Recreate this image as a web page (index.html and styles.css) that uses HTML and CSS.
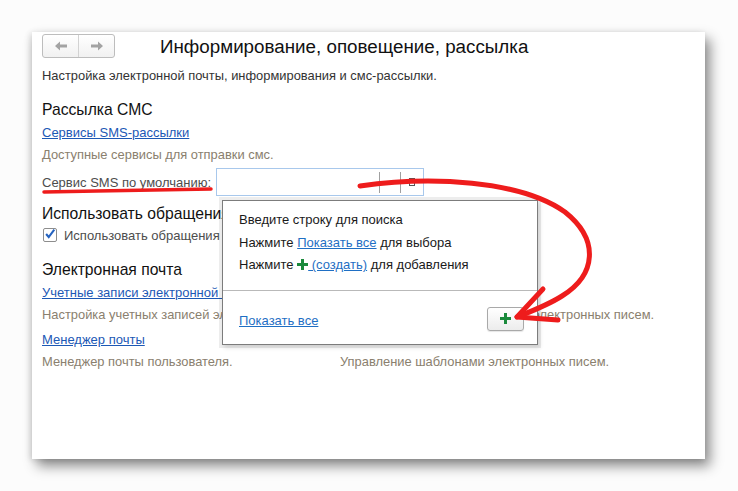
FILE: index.html
```html
<!DOCTYPE html>
<html lang="ru">
<head>
<meta charset="utf-8">
<link rel="stylesheet" href="styles.css">
</head>
<body>
<div class="window">
  <div class="header">
    <div class="nav">
      <span class="nav-btn"><svg width="14" height="10" viewBox="0 0 14 10"><path d="M1 5 L6 0.5 L6 3.5 L13 3.5 L13 6.5 L6 6.5 L6 9.5 Z" fill="#a3a3a3"/></svg></span>
      <span class="nav-btn"><svg width="14" height="10" viewBox="0 0 14 10"><path d="M13 5 L8 0.5 L8 3.5 L1 3.5 L1 6.5 L8 6.5 L8 9.5 Z" fill="#a3a3a3"/></svg></span>
    </div>
    <h1 class="title">Информирование, оповещение, рассылка</h1>
  </div>
  <p class="subtitle">Настройка электронной почты, информирования и смс-рассылки.</p>

  <h2 class="section">Рассылка СМС</h2>
  <a class="link" href="#">Сервисы SMS-рассылки</a>
  <p class="desc">Доступные сервисы для отправки смс.</p>
  <div class="field-row">
    <span class="field-label">Сервис SMS по умолчанию:</span>
    <div class="field">
      <span class="field-sep sep1"></span>
      <span class="field-sep sep2"></span>
      <span class="field-icon"></span>
      <div class="popup">
        <div class="popup-body">
          <p class="popup-line">Введите строку для поиска</p>
          <p class="popup-line">Нажмите <a class="plink" href="#">Показать все</a> для выбора</p>
          <p class="popup-line">Нажмите <span class="plus small"></span><a class="plink" href="#"> (создать)</a> для добавления</p>
        </div>
        <div class="popup-foot">
          <a class="plink" href="#">Показать все</a>
          <button class="add-btn"><span class="plus"></span></button>
        </div>
      </div>
    </div>
  </div>

  <h2 class="section sec2">Использовать обращения</h2>
  <label class="check-row"><span class="checkbox"><svg width="14" height="14" viewBox="0 0 14 14"><path d="M2.5 7 L5.5 10.5 L12 2" fill="none" stroke="#2563c0" stroke-width="2.4"/></svg></span>Использовать обращения</label>

  <h2 class="section sec3">Электронная почта</h2>
  <div class="grid">
    <a class="link" href="#">Учетные записи электронной почты</a>
    <span></span>
    <p class="desc span2">Настройка учетных записей электронной почты для отправки, а также получения электронных писем.</p>
    <a class="link gap-top" href="#">Менеджер почты</a>
    <span></span>
    <p class="desc">Менеджер почты пользователя.</p>
    <p class="desc">Управление шаблонами электронных писем.</p>
  </div>
</div>

<svg class="annot" width="738" height="491" viewBox="0 0 738 491">
  <path d="M44 192 C100 191 160 190 211 189" fill="none" stroke="#ee1c1c" stroke-width="3.5" stroke-linecap="round"/>
  <path d="M360 186 C430 176 520 180 565 212 C600 240 596 275 562 296 C548 305 532 311 517 317" fill="none" stroke="#ee1c1c" stroke-width="5" stroke-linecap="round"/>
  <path d="M543 289 L517 317 L558 320" fill="none" stroke="#ee1c1c" stroke-width="5" stroke-linecap="round" stroke-linejoin="round"/>
</svg>
</body>
</html>
```

FILE: styles.css
```css
html, body {
  margin: 0;
  padding: 0;
}
body {
  background: #fcfcfc;
  width: 738px;
  height: 491px;
  position: relative;
  overflow: hidden;
  font-family: "Liberation Sans", Arial, sans-serif;
  color: #333;
}
.window {
  position: absolute;
  left: 32px;
  top: 32px;
  width: 673px;
  height: 427px;
  box-sizing: border-box;
  background: #fff;
  padding: 2px 10px 0 10px;
  box-shadow: 5px 7px 12px rgba(0,0,0,0.45), -2px 1px 6px rgba(0,0,0,0.12);
}
.header {
  display: flex;
  align-items: center;
  height: 24px;
}
.nav {
  display: flex;
  width: 73px;
  height: 24px;
  box-sizing: border-box;
  border: 1px solid #bdbdbd;
  border-radius: 3px;
  background: linear-gradient(#ffffff, #f1f1f1);
}
.nav-btn {
  flex: 1;
  display: flex;
  align-items: center;
  justify-content: center;
}
.nav-btn + .nav-btn {
  border-left: 1px solid #d2d2d2;
}
.title {
  margin: 1px 0 0 45px;
  font-size: 18.8px;
  font-weight: normal;
  color: #111;
  line-height: 24px;
}
.subtitle {
  margin: 9px 0 0;
  font-size: 12.9px;
  line-height: 17px;
  color: #333;
}
.section {
  margin: 16px 0 0;
  font-size: 15.7px;
  font-weight: normal;
  line-height: 20px;
  color: #111;
}
.sec2 { margin-top: 8px; white-space: nowrap; }
.sec3 { margin-top: 14px; }
.link {
  display: block;
  margin-top: 2px;
  font-size: 13px;
  line-height: 22px;
  color: #1c58b5;
  text-decoration: underline;
  white-space: nowrap;
}
.desc {
  margin: 0;
  font-size: 12.9px;
  line-height: 22px;
  color: #8a806e;
  white-space: nowrap;
}
.field-row {
  display: flex;
  align-items: center;
  margin-top: 2px;
  height: 28px;
}
.field-label {
  font-size: 13px;
  color: #4d4d4d;
  width: 174px;
  white-space: nowrap;
}
.field {
  position: relative;
  width: 208px;
  height: 28px;
  box-sizing: border-box;
  border: 1px solid #a8c8ec;
  background: #fff;
}
.field-sep {
  position: absolute;
  top: 3px;
  bottom: 2px;
  width: 1px;
  background: #a0a0a0;
}
.sep1 { left: 162px; }
.sep2 { left: 183px; }
.field-icon {
  position: absolute;
  left: 192px;
  top: 9px;
  width: 4px;
  height: 6px;
  border: 1px solid #555;
}
.popup {
  position: absolute;
  left: 5px;
  top: 31px;
  width: 316px;
  height: 145px;
  box-sizing: border-box;
  border: 1px solid #7c7c7c;
  background: #fff;
  box-shadow: 0 0 0 3px rgba(0,0,0,0.07), 2px 3px 4px rgba(0,0,0,0.12);
  z-index: 5;
}
.popup-body {
  height: 90px;
  box-sizing: border-box;
  padding: 8px 0 0 16px;
  border-bottom: 1px solid #b9b9b9;
}
.popup-line {
  margin: 0;
  font-size: 13px;
  line-height: 22.5px;
  color: #1a1a1a;
  white-space: nowrap;
}
.plink {
  color: #1f6fc4;
  text-decoration: underline;
}
.popup-foot {
  display: flex;
  align-items: center;
  justify-content: space-between;
  height: 53px;
  box-sizing: border-box;
  padding: 5px 13px 0 16px;
  font-size: 13px;
}
.add-btn {
  width: 37px;
  height: 24px;
  margin-top: -3px;
  padding: 0;
  border: 1px solid #a9a9a9;
  border-radius: 3px;
  background: linear-gradient(#ffffff, #ececec);
  display: flex;
  align-items: center;
  justify-content: center;
  box-shadow: 0 1px 1px rgba(0,0,0,0.1);
}
.plus {
  position: relative;
  display: inline-block;
  width: 11px;
  height: 11px;
}
.plus::before, .plus::after {
  content: "";
  position: absolute;
  background: #1b8a3c;
}
.plus::before { left: 4px; top: 0; width: 3px; height: 11px; }
.plus::after { left: 0; top: 4px; width: 11px; height: 3px; }
.plus.small { vertical-align: -1px; }
.check-row {
  display: flex;
  align-items: center;
  height: 22px;
  font-size: 13px;
  color: #4d4d4d;
  white-space: nowrap;
}
.checkbox {
  width: 14px;
  height: 14px;
  box-sizing: border-box;
  border: 1px solid #8d8d8d;
  border-radius: 2px;
  margin: 0 7px 0 1px;
  display: flex;
  align-items: center;
  justify-content: center;
  overflow: visible;
}
.checkbox svg { margin-top: -2px; }
.grid {
  display: grid;
  grid-template-columns: 298px 1fr;
}
.span2 { grid-column: 1 / 3; }
.gap-top { margin-top: 3px; }
.annot {
  position: absolute;
  left: 0;
  top: 0;
  pointer-events: none;
  z-index: 10;
}
```
